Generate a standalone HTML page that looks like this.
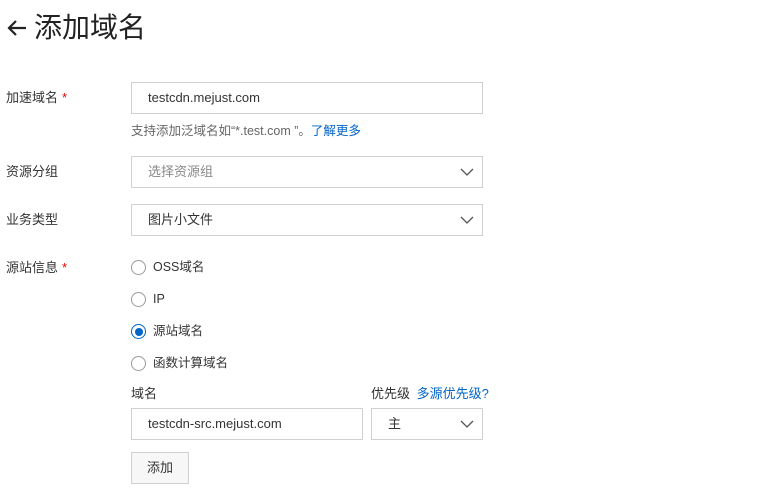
<!DOCTYPE html>
<html><head><meta charset="utf-8"><style>
body{margin:0;width:766px;height:496px;background:#fff;font-family:"Liberation Sans","Noto Sans CJK SC",sans-serif;color:#333;position:relative;overflow:hidden}
.a{position:absolute}
.lbl{position:absolute;left:6px;font-size:13px;color:#333;line-height:16px}
.req{color:#e00;margin-left:4px}
.box{position:absolute;border:1px solid #d0d0d0;box-sizing:border-box;font-size:13px;line-height:30px;padding-left:16px;color:#333}
.chev{position:absolute;right:8px;top:8px}
.r{position:absolute;left:131px;width:13px;height:13px;border:1px solid #999;border-radius:50%;background:#fff}
.rt{position:absolute;left:153px;font-size:12.5px;line-height:16px;color:#333}
a{color:#0064c8;text-decoration:none}
</style></head><body>
<svg class="a" style="left:6px;top:19px" width="22" height="18" viewBox="0 0 22 18"><path d="M20 9H3M10 2L3 9l7 7" stroke="#222" stroke-width="2.2" fill="none"/></svg>
<div class="a" style="left:34px;top:11px;font-size:28px;line-height:34px;color:#222">添加域名</div>

<div class="lbl" style="top:90px">加速域名<span class="req">*</span></div>
<div class="box" style="left:131px;top:82px;width:352px;height:32px">testcdn.mejust.com</div>
<div class="a" style="left:131px;top:123px;font-size:12.5px;color:#666;line-height:16px">支持添加泛域名如“*.test.com ”。<a>了解更多</a></div>

<div class="lbl" style="top:164px">资源分组</div>
<div class="box" style="left:131px;top:156px;width:352px;height:32px;color:#888">选择资源组<svg class="chev" width="14" height="14" viewBox="0 0 14 14"><path d="M1 4l6 6 6-6" stroke="#555" stroke-width="1.3" fill="none"/></svg></div>

<div class="lbl" style="top:212px">业务类型</div>
<div class="box" style="left:131px;top:204px;width:352px;height:32px">图片小文件<svg class="chev" width="14" height="14" viewBox="0 0 14 14"><path d="M1 4l6 6 6-6" stroke="#555" stroke-width="1.3" fill="none"/></svg></div>

<div class="lbl" style="top:260px">源站信息<span class="req">*</span></div>
<div class="r" style="top:260px"></div><div class="rt" style="top:259px">OSS域名</div>
<div class="r" style="top:292px"></div><div class="rt" style="top:291px">IP</div>
<div class="r" style="top:324px;border-color:#0064c8"><div style="position:absolute;left:2.5px;top:2.5px;width:8px;height:8px;border-radius:50%;background:#0064c8"></div></div><div class="rt" style="top:323px">源站域名</div>
<div class="r" style="top:356px"></div><div class="rt" style="top:355px">函数计算域名</div>

<div class="a" style="left:131px;top:386px;font-size:13px;line-height:16px">域名</div>
<div class="a" style="left:371px;top:386px;font-size:13px;line-height:16px">优先级 <a style="margin-left:3px">多源优先级?</a></div>
<div class="box" style="left:131px;top:408px;width:232px;height:32px">testcdn-src.mejust.com</div>
<div class="box" style="left:371px;top:408px;width:112px;height:32px">主<svg class="chev" width="14" height="14" viewBox="0 0 14 14"><path d="M1 4l6 6 6-6" stroke="#555" stroke-width="1.3" fill="none"/></svg></div>
<div class="box" style="left:131px;top:452px;width:58px;height:32px;background:#f7f7f7;padding:0;text-align:center">添加</div>
</body></html>
